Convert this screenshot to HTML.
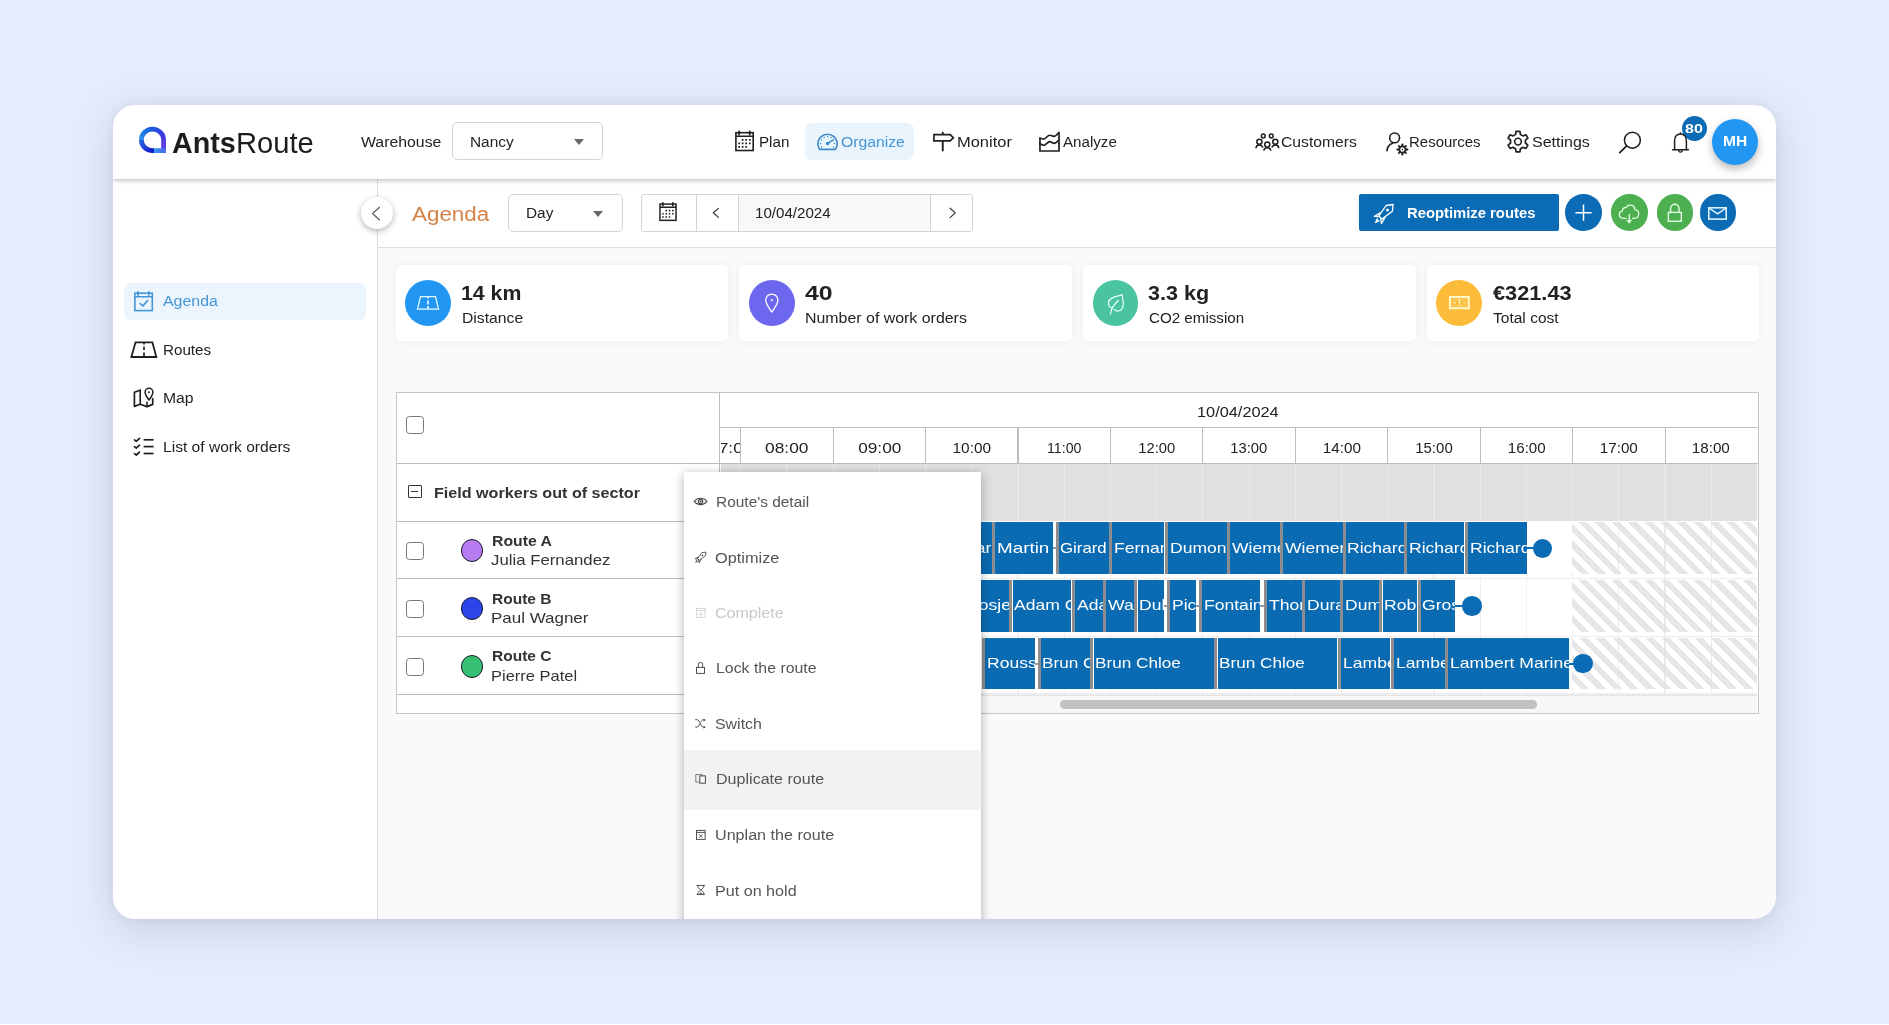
<!DOCTYPE html>
<html lang="en"><head><meta charset="utf-8"><title>AntsRoute - Agenda</title>
<style>
html,body{margin:0;padding:0}
body{width:1889px;height:1025px;overflow:hidden;position:relative;background:#e6ecfc;font-family:"Liberation Sans", sans-serif;}
div,span.t,svg{position:absolute;box-sizing:border-box}
span.t{white-space:pre;line-height:1;display:block}

.win{border-radius:22px;background:#fafafa;box-shadow:0 10px 40px rgba(85,90,120,.21),0 0 14px rgba(85,90,120,.07);overflow:hidden;will-change:transform}
.hdr{background:#fff;box-shadow:0 1px 5px rgba(0,0,0,.3)}
.side{background:#fff;border-right:1px solid #dcdcdc}
.card{background:#fff;border-radius:5px;box-shadow:0 0 10px rgba(20,20,60,.06)}
.circ{border-radius:50%}
.sel{background:#fff;border:1px solid #d4d4d4;border-radius:5px}
.cb{background:#fff;border:1.5px solid #777;border-radius:3.5px}
.bar{background:#0a6bb3;overflow:hidden}
.sep{background:#8d8d8d}
.menu{background:#fff;box-shadow:0 2px 10px rgba(0,0,0,.3)}

</style></head>
<body>
<div style="left:0px;top:1024px;width:1889px;height:1px;background:#fff"></div>
<div class="win" style="left:113px;top:105px;width:1663px;height:814px">
<div style="left:265px;top:74px;width:1398px;height:68.5px;background:#fff;border-bottom:1px solid #dedede"></div>
<div class="side" style="left:0px;top:74px;width:265px;height:740px;"></div>
<div style="left:11.4px;top:178px;width:241.2px;height:36.6px;background:#ecf5fe;border-radius:6px"></div>
<span class="t" style="left:49.95px;top:189.25px;font-size:14px;color:#4596d6;transform:scaleX(1.1365);transform-origin:0 50%;">Agenda</span>
<span class="t" style="left:50.49px;top:237.50px;font-size:14px;color:#222;transform:scaleX(1.0848);transform-origin:0 50%;">Routes</span>
<span class="t" style="left:50.46px;top:286.00px;font-size:14px;color:#222;transform:scaleX(1.1243);transform-origin:0 50%;">Map</span>
<span class="t" style="left:50.47px;top:334.75px;font-size:14px;color:#222;transform:scaleX(1.1136);transform-origin:0 50%;">List of work orders</span>
<span class="t" style="left:298.88px;top:99.10px;font-size:20px;color:#d58347;transform:scaleX(1.1193);transform-origin:0 50%;">Agenda</span>
<div class="sel" style="left:394.6px;top:88.7px;width:115px;height:38px;"></div>
<span class="t" style="left:412.73px;top:101.00px;font-size:14px;color:#222;transform:scaleX(1.0989);transform-origin:0 50%;">Day</span>
<div style="left:480px;top:105.5px;width:0px;height:0px;border-left:5.5px solid transparent;border-right:5.5px solid transparent;border-top:6px solid #666"></div>
<div style="left:527.5px;top:89px;width:332.5px;height:38px;background:#fff;border:1px solid #d4d4d4;border-radius:3px"></div>
<div style="left:582.5px;top:89px;width:1px;height:38px;background:#d4d4d4"></div>
<div style="left:625.25px;top:90px;width:192.5px;height:36px;background:#f8f8f8;border-left:1px solid #d4d4d4;border-right:1px solid #d4d4d4"></div>
<span class="t" style="left:642.49px;top:101.00px;font-size:14px;color:#222;transform:scaleX(1.0791);transform-origin:0 50%;">10/04/2024</span>
<div style="left:1246px;top:89.25px;width:200.25px;height:36.5px;background:#0b6cb5;border-radius:2px"></div>
<span class="t" style="left:1294.01px;top:100.50px;font-size:14px;font-weight:700;color:#fff;transform:scaleX(1.0578);transform-origin:0 50%;">Reoptimize routes</span>
<div class="circ" style="left:1452.2px;top:89.3px;width:36.6px;height:36.6px;background:#0b6cb5"></div>
<div class="circ" style="left:1498.1px;top:89.3px;width:36.6px;height:36.6px;background:#4caf50"></div>
<div class="circ" style="left:1543.5px;top:89.3px;width:36.6px;height:36.6px;background:#4caf50"></div>
<div class="circ" style="left:1586.6px;top:89.3px;width:36.6px;height:36.6px;background:#0b6cb5"></div>
<div class="circ" style="left:248px;top:92.2px;width:32px;height:32px;background:#fff;box-shadow:0 2px 6px rgba(0,0,0,.3)"></div>
<div class="card" style="left:282.5px;top:160px;width:332.5px;height:75.5px;"></div>
<div class="circ" style="left:292.1px;top:174.9px;width:45.8px;height:45.8px;background:#2196f3"></div>
<span class="t" style="left:347.69px;top:178.00px;font-size:20px;font-weight:700;color:#222;transform:scaleX(1.0640);transform-origin:0 50%;">14 km</span>
<span class="t" style="left:348.71px;top:206.25px;font-size:14px;color:#222;transform:scaleX(1.1221);transform-origin:0 50%;">Distance</span>
<div class="card" style="left:626.25px;top:160px;width:332.5px;height:75.5px;"></div>
<div class="circ" style="left:635.85px;top:174.9px;width:45.8px;height:45.8px;background:#6d66ee"></div>
<span class="t" style="left:691.51px;top:178.00px;font-size:20px;font-weight:700;color:#222;transform:scaleX(1.2404);transform-origin:0 50%;">40</span>
<span class="t" style="left:692.45px;top:206.25px;font-size:14px;color:#222;transform:scaleX(1.1368);transform-origin:0 50%;">Number of work orders</span>
<div class="card" style="left:970.0px;top:160px;width:332.5px;height:75.5px;"></div>
<div class="circ" style="left:979.6px;top:174.9px;width:45.8px;height:45.8px;background:#4ac3a0"></div>
<span class="t" style="left:1035.42px;top:178.00px;font-size:20px;font-weight:700;color:#222;transform:scaleX(1.0775);transform-origin:0 50%;">3.3 kg</span>
<span class="t" style="left:1035.74px;top:206.25px;font-size:14px;color:#222;transform:scaleX(1.0819);transform-origin:0 50%;">CO2 emission</span>
<div class="card" style="left:1313.75px;top:160px;width:332.5px;height:75.5px;"></div>
<div class="circ" style="left:1323.35px;top:174.9px;width:45.8px;height:45.8px;background:#fdbb3a"></div>
<span class="t" style="left:1379.66px;top:178.00px;font-size:20px;font-weight:700;color:#222;transform:scaleX(1.0872);transform-origin:0 50%;">€321.43</span>
<span class="t" style="left:1379.97px;top:206.25px;font-size:14px;color:#222;transform:scaleX(1.1096);transform-origin:0 50%;">Total cost</span>
<div class="hdr" style="left:0px;top:0px;width:1663px;height:74px;"></div>
<span class="t" style="left:59.06px;top:24.00px;font-size:29px;font-weight:700;color:#1d1d1b;transform:scaleX(0.9902);transform-origin:0 50%;">Ants</span>
<span class="t" style="left:123.04px;top:24.00px;font-size:29px;color:#1d1d1b;transform:scaleX(1.0055);transform-origin:0 50%;">Route</span>
<span class="t" style="left:248.21px;top:29.50px;font-size:14px;color:#222;transform:scaleX(1.1307);transform-origin:0 50%;">Warehouse</span>
<div class="sel" style="left:338.6px;top:17.4px;width:151.8px;height:38px;"></div>
<span class="t" style="left:356.73px;top:29.50px;font-size:14px;color:#222;transform:scaleX(1.0991);transform-origin:0 50%;">Nancy</span>
<div style="left:461px;top:34.2px;width:0px;height:0px;border-left:5.5px solid transparent;border-right:5.5px solid transparent;border-top:6px solid #666"></div>
<span class="t" style="left:645.74px;top:29.50px;font-size:14px;color:#222;transform:scaleX(1.0834);transform-origin:0 50%;">Plan</span>
<div style="left:692px;top:18.2px;width:109px;height:36.8px;background:#eaf4fd;border-radius:7px"></div>
<span class="t" style="left:727.96px;top:29.50px;font-size:14px;color:#4596d6;transform:scaleX(1.1242);transform-origin:0 50%;">Organize</span>
<span class="t" style="left:843.68px;top:29.50px;font-size:14px;color:#222;transform:scaleX(1.1753);transform-origin:0 50%;">Monitor</span>
<span class="t" style="left:950.49px;top:29.50px;font-size:14px;color:#222;transform:scaleX(1.0815);transform-origin:0 50%;">Analyze</span>
<span class="t" style="left:1167.72px;top:29.50px;font-size:14px;color:#222;transform:scaleX(1.1209);transform-origin:0 50%;">Customers</span>
<span class="t" style="left:1295.75px;top:29.50px;font-size:14px;color:#222;transform:scaleX(1.0702);transform-origin:0 50%;">Resources</span>
<span class="t" style="left:1418.95px;top:29.50px;font-size:14px;color:#222;transform:scaleX(1.1438);transform-origin:0 50%;">Settings</span>
<div class="circ" style="left:1599px;top:13.7px;width:46.2px;height:46.2px;background:#2196f3;box-shadow:0 4px 8px rgba(0,0,0,.28)"></div>
<span class="t" style="left:1609.92px;top:29.30px;font-size:14px;font-weight:700;color:#fff;transform:scaleX(1.1074);transform-origin:0 50%;">MH</span>
<div class="circ" style="left:1569px;top:11.2px;width:25px;height:25px;background:#0b6cb5"></div>
<span class="t" style="left:1572.00px;top:17.20px;font-size:13px;font-weight:700;color:#fff;transform:scaleX(1.2330);transform-origin:0 50%;">80</span>
<div style="left:283.0px;top:286.75px;width:1363.0px;height:322.0px;background:#fff;border:1.5px solid #c6c6c6"></div>
<div style="left:606.1px;top:287.5px;width:1.1px;height:71.0px;background:#bcbcbc"></div>
<div style="left:607.0px;top:322.0px;width:1038.25px;height:1.1px;background:#bcbcbc"></div>
<div style="left:283.75px;top:357.9px;width:1361.5px;height:1.1px;background:#bcbcbc"></div>
<span class="t" style="left:1084.43px;top:298.75px;font-size:15px;color:#222;transform:scaleX(1.0882);transform-origin:0 50%;">10/04/2024</span>
<div style="left:627.2px;top:323px;width:1.1px;height:35.5px;background:#bcbcbc"></div>
<span class="t" style="left:655.19px;top:334.50px;font-size:15px;color:#222;transform:scaleX(1.1559);transform-origin:50% 50%;">08:00</span>
<div style="left:719.63px;top:323px;width:1.1px;height:35.5px;background:#bcbcbc"></div>
<span class="t" style="left:747.62px;top:334.50px;font-size:15px;color:#222;transform:scaleX(1.1506);transform-origin:50% 50%;">09:00</span>
<div style="left:812.06px;top:323px;width:1.1px;height:35.5px;background:#bcbcbc"></div>
<span class="t" style="left:840.05px;top:334.50px;font-size:15px;color:#222;transform:scaleX(1.0254);transform-origin:50% 50%;">10:00</span>
<div style="left:904.49px;top:323px;width:1.1px;height:35.5px;background:#bcbcbc"></div>
<span class="t" style="left:933.04px;top:334.50px;font-size:15px;color:#222;transform:scaleX(0.9441);transform-origin:50% 50%;">11:00</span>
<div style="left:996.92px;top:323px;width:1.1px;height:35.5px;background:#bcbcbc"></div>
<span class="t" style="left:1024.91px;top:334.50px;font-size:15px;color:#222;transform:scaleX(0.9841);transform-origin:50% 50%;">12:00</span>
<div style="left:1089.35px;top:323px;width:1.1px;height:35.5px;background:#bcbcbc"></div>
<span class="t" style="left:1117.34px;top:334.50px;font-size:15px;color:#222;transform:scaleX(0.9841);transform-origin:50% 50%;">13:00</span>
<div style="left:1181.78px;top:323px;width:1.1px;height:35.5px;background:#bcbcbc"></div>
<span class="t" style="left:1209.77px;top:334.50px;font-size:15px;color:#222;transform:scaleX(1.0174);transform-origin:50% 50%;">14:00</span>
<div style="left:1274.21px;top:323px;width:1.1px;height:35.5px;background:#bcbcbc"></div>
<span class="t" style="left:1302.20px;top:334.50px;font-size:15px;color:#222;">15:00</span>
<div style="left:1366.64px;top:323px;width:1.1px;height:35.5px;background:#bcbcbc"></div>
<span class="t" style="left:1394.63px;top:334.50px;font-size:15px;color:#222;transform:scaleX(1.0067);transform-origin:50% 50%;">16:00</span>
<div style="left:1459.07px;top:323px;width:1.1px;height:35.5px;background:#bcbcbc"></div>
<span class="t" style="left:1487.06px;top:334.50px;font-size:15px;color:#222;transform:scaleX(1.0147);transform-origin:50% 50%;">17:00</span>
<div style="left:1551.5px;top:323px;width:1.1px;height:35.5px;background:#bcbcbc"></div>
<span class="t" style="left:1579.49px;top:334.50px;font-size:15px;color:#222;transform:scaleX(1.0147);transform-origin:50% 50%;">18:00</span>
<div style="left:607.60px;top:323.00px;width:19.55px;height:35px;overflow:hidden">
<span class="t" style="left:-9.10px;top:11.50px;font-size:15px;color:#222;transform:scaleX(1.1506);transform-origin:50% 50%;">07:00</span>
</div>
<div style="left:607.6px;top:359.0px;width:1036.2px;height:57.2px;background:#e0e0e0"></div>
<div style="left:627.15px;top:359.3px;width:1.2px;height:56.9px;background:#e9e9e9"></div>
<div style="left:673.37px;top:359.3px;width:1.2px;height:56.9px;background:#e9e9e9"></div>
<div style="left:719.58px;top:359.3px;width:1.2px;height:56.9px;background:#e9e9e9"></div>
<div style="left:765.8px;top:359.3px;width:1.2px;height:56.9px;background:#e9e9e9"></div>
<div style="left:812.01px;top:359.3px;width:1.2px;height:56.9px;background:#e9e9e9"></div>
<div style="left:858.23px;top:359.3px;width:1.2px;height:56.9px;background:#e9e9e9"></div>
<div style="left:904.44px;top:359.3px;width:1.2px;height:56.9px;background:#e9e9e9"></div>
<div style="left:950.66px;top:359.3px;width:1.2px;height:56.9px;background:#e9e9e9"></div>
<div style="left:996.87px;top:359.3px;width:1.2px;height:56.9px;background:#e9e9e9"></div>
<div style="left:1043.09px;top:359.3px;width:1.2px;height:56.9px;background:#e9e9e9"></div>
<div style="left:1089.3px;top:359.3px;width:1.2px;height:56.9px;background:#e9e9e9"></div>
<div style="left:1135.51px;top:359.3px;width:1.2px;height:56.9px;background:#e9e9e9"></div>
<div style="left:1181.73px;top:359.3px;width:1.2px;height:56.9px;background:#e9e9e9"></div>
<div style="left:1227.94px;top:359.3px;width:1.2px;height:56.9px;background:#e9e9e9"></div>
<div style="left:1274.16px;top:359.3px;width:1.2px;height:56.9px;background:#e9e9e9"></div>
<div style="left:1320.37px;top:359.3px;width:1.2px;height:56.9px;background:#e9e9e9"></div>
<div style="left:1366.59px;top:359.3px;width:1.2px;height:56.9px;background:#e9e9e9"></div>
<div style="left:1412.8px;top:359.3px;width:1.2px;height:56.9px;background:#e9e9e9"></div>
<div style="left:1459.02px;top:359.3px;width:1.2px;height:56.9px;background:#e9e9e9"></div>
<div style="left:1505.23px;top:359.3px;width:1.2px;height:56.9px;background:#e9e9e9"></div>
<div style="left:1551.45px;top:359.3px;width:1.2px;height:56.9px;background:#e9e9e9"></div>
<div style="left:1597.66px;top:359.3px;width:1.2px;height:56.9px;background:#e9e9e9"></div>
<div style="left:627.15px;top:416.2px;width:1.2px;height:57.8px;background:#f1f1f1"></div>
<div style="left:673.37px;top:416.2px;width:1.2px;height:57.8px;background:#f1f1f1"></div>
<div style="left:719.58px;top:416.2px;width:1.2px;height:57.8px;background:#f1f1f1"></div>
<div style="left:765.8px;top:416.2px;width:1.2px;height:57.8px;background:#f1f1f1"></div>
<div style="left:812.01px;top:416.2px;width:1.2px;height:57.8px;background:#f1f1f1"></div>
<div style="left:858.23px;top:416.2px;width:1.2px;height:57.8px;background:#f1f1f1"></div>
<div style="left:904.44px;top:416.2px;width:1.2px;height:57.8px;background:#f1f1f1"></div>
<div style="left:950.66px;top:416.2px;width:1.2px;height:57.8px;background:#f1f1f1"></div>
<div style="left:996.87px;top:416.2px;width:1.2px;height:57.8px;background:#f1f1f1"></div>
<div style="left:1043.09px;top:416.2px;width:1.2px;height:57.8px;background:#f1f1f1"></div>
<div style="left:1089.3px;top:416.2px;width:1.2px;height:57.8px;background:#f1f1f1"></div>
<div style="left:1135.51px;top:416.2px;width:1.2px;height:57.8px;background:#f1f1f1"></div>
<div style="left:1181.73px;top:416.2px;width:1.2px;height:57.8px;background:#f1f1f1"></div>
<div style="left:1227.94px;top:416.2px;width:1.2px;height:57.8px;background:#f1f1f1"></div>
<div style="left:1274.16px;top:416.2px;width:1.2px;height:57.8px;background:#f1f1f1"></div>
<div style="left:1320.37px;top:416.2px;width:1.2px;height:57.8px;background:#f1f1f1"></div>
<div style="left:1366.59px;top:416.2px;width:1.2px;height:57.8px;background:#f1f1f1"></div>
<div style="left:1412.8px;top:416.2px;width:1.2px;height:57.8px;background:#f1f1f1"></div>
<div style="left:1459.02px;top:416.2px;width:1.2px;height:57.8px;background:#f1f1f1"></div>
<div style="left:1505.23px;top:416.2px;width:1.2px;height:57.8px;background:#f1f1f1"></div>
<div style="left:1551.45px;top:416.2px;width:1.2px;height:57.8px;background:#f1f1f1"></div>
<div style="left:1597.66px;top:416.2px;width:1.2px;height:57.8px;background:#f1f1f1"></div>
<div style="left:608.2px;top:472.8px;width:1035.6px;height:1.2px;background:#ededed"></div>
<div style="left:1459.12px;top:417.0px;width:184.68px;height:51.8px;background:repeating-linear-gradient(45deg,#e6e6e6 0,#e6e6e6 .85px,#fff .85px,#fff 6.55px,#e6e6e6 6.55px,#e6e6e6 11.6px)"></div>
<div style="left:1505.24px;top:417.0px;width:1.2px;height:51.8px;background:rgba(225,225,225,.7)"></div>
<div style="left:1551.45px;top:417.0px;width:1.2px;height:51.8px;background:rgba(225,225,225,.7)"></div>
<div style="left:1597.67px;top:417.0px;width:1.2px;height:51.8px;background:rgba(225,225,225,.7)"></div>
<div style="left:627.15px;top:474.0px;width:1.2px;height:57.8px;background:#f1f1f1"></div>
<div style="left:673.37px;top:474.0px;width:1.2px;height:57.8px;background:#f1f1f1"></div>
<div style="left:719.58px;top:474.0px;width:1.2px;height:57.8px;background:#f1f1f1"></div>
<div style="left:765.8px;top:474.0px;width:1.2px;height:57.8px;background:#f1f1f1"></div>
<div style="left:812.01px;top:474.0px;width:1.2px;height:57.8px;background:#f1f1f1"></div>
<div style="left:858.23px;top:474.0px;width:1.2px;height:57.8px;background:#f1f1f1"></div>
<div style="left:904.44px;top:474.0px;width:1.2px;height:57.8px;background:#f1f1f1"></div>
<div style="left:950.66px;top:474.0px;width:1.2px;height:57.8px;background:#f1f1f1"></div>
<div style="left:996.87px;top:474.0px;width:1.2px;height:57.8px;background:#f1f1f1"></div>
<div style="left:1043.09px;top:474.0px;width:1.2px;height:57.8px;background:#f1f1f1"></div>
<div style="left:1089.3px;top:474.0px;width:1.2px;height:57.8px;background:#f1f1f1"></div>
<div style="left:1135.51px;top:474.0px;width:1.2px;height:57.8px;background:#f1f1f1"></div>
<div style="left:1181.73px;top:474.0px;width:1.2px;height:57.8px;background:#f1f1f1"></div>
<div style="left:1227.94px;top:474.0px;width:1.2px;height:57.8px;background:#f1f1f1"></div>
<div style="left:1274.16px;top:474.0px;width:1.2px;height:57.8px;background:#f1f1f1"></div>
<div style="left:1320.37px;top:474.0px;width:1.2px;height:57.8px;background:#f1f1f1"></div>
<div style="left:1366.59px;top:474.0px;width:1.2px;height:57.8px;background:#f1f1f1"></div>
<div style="left:1412.8px;top:474.0px;width:1.2px;height:57.8px;background:#f1f1f1"></div>
<div style="left:1459.02px;top:474.0px;width:1.2px;height:57.8px;background:#f1f1f1"></div>
<div style="left:1505.23px;top:474.0px;width:1.2px;height:57.8px;background:#f1f1f1"></div>
<div style="left:1551.45px;top:474.0px;width:1.2px;height:57.8px;background:#f1f1f1"></div>
<div style="left:1597.66px;top:474.0px;width:1.2px;height:57.8px;background:#f1f1f1"></div>
<div style="left:608.2px;top:530.6px;width:1035.6px;height:1.2px;background:#ededed"></div>
<div style="left:1459.12px;top:474.8px;width:184.68px;height:51.8px;background:repeating-linear-gradient(45deg,#e6e6e6 0,#e6e6e6 .85px,#fff .85px,#fff 6.55px,#e6e6e6 6.55px,#e6e6e6 11.6px)"></div>
<div style="left:1505.24px;top:474.8px;width:1.2px;height:51.8px;background:rgba(225,225,225,.7)"></div>
<div style="left:1551.45px;top:474.8px;width:1.2px;height:51.8px;background:rgba(225,225,225,.7)"></div>
<div style="left:1597.67px;top:474.8px;width:1.2px;height:51.8px;background:rgba(225,225,225,.7)"></div>
<div style="left:627.15px;top:531.8px;width:1.2px;height:57.8px;background:#f1f1f1"></div>
<div style="left:673.37px;top:531.8px;width:1.2px;height:57.8px;background:#f1f1f1"></div>
<div style="left:719.58px;top:531.8px;width:1.2px;height:57.8px;background:#f1f1f1"></div>
<div style="left:765.8px;top:531.8px;width:1.2px;height:57.8px;background:#f1f1f1"></div>
<div style="left:812.01px;top:531.8px;width:1.2px;height:57.8px;background:#f1f1f1"></div>
<div style="left:858.23px;top:531.8px;width:1.2px;height:57.8px;background:#f1f1f1"></div>
<div style="left:904.44px;top:531.8px;width:1.2px;height:57.8px;background:#f1f1f1"></div>
<div style="left:950.66px;top:531.8px;width:1.2px;height:57.8px;background:#f1f1f1"></div>
<div style="left:996.87px;top:531.8px;width:1.2px;height:57.8px;background:#f1f1f1"></div>
<div style="left:1043.09px;top:531.8px;width:1.2px;height:57.8px;background:#f1f1f1"></div>
<div style="left:1089.3px;top:531.8px;width:1.2px;height:57.8px;background:#f1f1f1"></div>
<div style="left:1135.51px;top:531.8px;width:1.2px;height:57.8px;background:#f1f1f1"></div>
<div style="left:1181.73px;top:531.8px;width:1.2px;height:57.8px;background:#f1f1f1"></div>
<div style="left:1227.94px;top:531.8px;width:1.2px;height:57.8px;background:#f1f1f1"></div>
<div style="left:1274.16px;top:531.8px;width:1.2px;height:57.8px;background:#f1f1f1"></div>
<div style="left:1320.37px;top:531.8px;width:1.2px;height:57.8px;background:#f1f1f1"></div>
<div style="left:1366.59px;top:531.8px;width:1.2px;height:57.8px;background:#f1f1f1"></div>
<div style="left:1412.8px;top:531.8px;width:1.2px;height:57.8px;background:#f1f1f1"></div>
<div style="left:1459.02px;top:531.8px;width:1.2px;height:57.8px;background:#f1f1f1"></div>
<div style="left:1505.23px;top:531.8px;width:1.2px;height:57.8px;background:#f1f1f1"></div>
<div style="left:1551.45px;top:531.8px;width:1.2px;height:57.8px;background:#f1f1f1"></div>
<div style="left:1597.66px;top:531.8px;width:1.2px;height:57.8px;background:#f1f1f1"></div>
<div style="left:608.2px;top:588.4px;width:1035.6px;height:1.2px;background:#ededed"></div>
<div style="left:1459.12px;top:532.6px;width:184.68px;height:51.8px;background:repeating-linear-gradient(45deg,#e6e6e6 0,#e6e6e6 .85px,#fff .85px,#fff 6.55px,#e6e6e6 6.55px,#e6e6e6 11.6px)"></div>
<div style="left:1505.24px;top:532.6px;width:1.2px;height:51.8px;background:rgba(225,225,225,.7)"></div>
<div style="left:1551.45px;top:532.6px;width:1.2px;height:51.8px;background:rgba(225,225,225,.7)"></div>
<div style="left:1597.67px;top:532.6px;width:1.2px;height:51.8px;background:rgba(225,225,225,.7)"></div>
<div class="sep" style="left:844.6px;top:417.0px;width:3.1px;height:51.8px;"></div>
<div class="bar" style="left:847.70px;top:417.00px;width:31.30px;height:51.8px">
<span class="t" style="left:1.70px;top:17.50px;font-size:15px;color:#fff;transform:scaleX(1.1700);transform-origin:0 50%;">Garcia</span>
</div>
<div class="sep" style="left:878.9px;top:417.0px;width:3.1px;height:51.8px;"></div>
<div class="bar" style="left:882.00px;top:417.00px;width:58.00px;height:51.8px">
<span class="t" style="left:1.70px;top:17.50px;font-size:15px;color:#fff;transform:scaleX(1.2550);transform-origin:0 50%;">Martin</span>
</div>
<div style="left:940px;top:442.2px;width:2.65px;height:1.8px;background:#9a9a9a"></div>
<div class="sep" style="left:942.65px;top:417.0px;width:3.1px;height:51.8px;"></div>
<div class="bar" style="left:945.75px;top:417.00px;width:50.00px;height:51.8px">
<span class="t" style="left:1.70px;top:17.50px;font-size:15px;color:#fff;transform:scaleX(1.1200);transform-origin:0 50%;">Girard</span>
</div>
<div class="sep" style="left:995.9px;top:417.0px;width:3.1px;height:51.8px;"></div>
<div class="bar" style="left:999.00px;top:417.00px;width:51.75px;height:51.8px">
<span class="t" style="left:1.70px;top:17.50px;font-size:15px;color:#fff;transform:scaleX(1.1700);transform-origin:0 50%;">Fernandez</span>
</div>
<div class="sep" style="left:1051.9px;top:417.0px;width:3.1px;height:51.8px;"></div>
<div class="bar" style="left:1055.00px;top:417.00px;width:58.75px;height:51.8px">
<span class="t" style="left:1.70px;top:17.50px;font-size:15px;color:#fff;transform:scaleX(1.1700);transform-origin:0 50%;">Dumont</span>
</div>
<div class="sep" style="left:1113.9px;top:417.0px;width:3.1px;height:51.8px;"></div>
<div class="bar" style="left:1117.00px;top:417.00px;width:50.00px;height:51.8px">
<span class="t" style="left:1.70px;top:17.50px;font-size:15px;color:#fff;transform:scaleX(1.1700);transform-origin:0 50%;">Wiemer</span>
</div>
<div class="sep" style="left:1166.9px;top:417.0px;width:3.1px;height:51.8px;"></div>
<div class="bar" style="left:1170.00px;top:417.00px;width:59.50px;height:51.8px">
<span class="t" style="left:1.70px;top:17.50px;font-size:15px;color:#fff;transform:scaleX(1.1700);transform-origin:0 50%;">Wiemer</span>
</div>
<div class="sep" style="left:1229.65px;top:417.0px;width:3.1px;height:51.8px;"></div>
<div class="bar" style="left:1232.75px;top:417.00px;width:57.75px;height:51.8px">
<span class="t" style="left:1.70px;top:17.50px;font-size:15px;color:#fff;transform:scaleX(1.1700);transform-origin:0 50%;">Richard</span>
</div>
<div class="sep" style="left:1290.9px;top:417.0px;width:3.1px;height:51.8px;"></div>
<div class="bar" style="left:1294.00px;top:417.00px;width:57.40px;height:51.8px">
<span class="t" style="left:1.70px;top:17.50px;font-size:15px;color:#fff;transform:scaleX(1.1700);transform-origin:0 50%;">Richard</span>
</div>
<div class="sep" style="left:1351.9px;top:417.0px;width:3.1px;height:51.8px;"></div>
<div class="bar" style="left:1355.00px;top:417.00px;width:58.80px;height:51.8px">
<span class="t" style="left:1.70px;top:17.50px;font-size:15px;color:#fff;transform:scaleX(1.1700);transform-origin:0 50%;">Richard</span>
</div>
<div style="left:1413.8px;top:442.2px;width:10.700000000000045px;height:2px;background:#0b6cb5"></div>
<div class="circ" style="left:1419.8px;top:433.5px;width:19.4px;height:19.4px;background:#0b6cb5"></div>
<div class="sep" style="left:849.4px;top:474.8px;width:3.1px;height:51.8px;"></div>
<div class="bar" style="left:852.50px;top:474.80px;width:43.75px;height:51.8px">
<span class="t" style="left:1.70px;top:17.50px;font-size:15px;color:#fff;transform:scaleX(1.1700);transform-origin:0 50%;">Bosjean</span>
</div>
<div class="sep" style="left:896.4px;top:474.8px;width:3.1px;height:51.8px;"></div>
<div class="bar" style="left:899.50px;top:474.80px;width:58.00px;height:51.8px">
<span class="t" style="left:1.70px;top:17.50px;font-size:15px;color:#fff;transform:scaleX(1.1700);transform-origin:0 50%;">Adam Chloe</span>
</div>
<div class="sep" style="left:958.9px;top:474.8px;width:3.1px;height:51.8px;"></div>
<div class="bar" style="left:962.00px;top:474.80px;width:28.25px;height:51.8px">
<span class="t" style="left:1.70px;top:17.50px;font-size:15px;color:#fff;transform:scaleX(1.1700);transform-origin:0 50%;">Adam</span>
</div>
<div class="sep" style="left:990.15px;top:474.8px;width:3.1px;height:51.8px;"></div>
<div class="bar" style="left:993.25px;top:474.80px;width:28.00px;height:51.8px">
<span class="t" style="left:1.70px;top:17.50px;font-size:15px;color:#fff;transform:scaleX(1.1700);transform-origin:0 50%;">Wagner</span>
</div>
<div class="sep" style="left:1021.4px;top:474.8px;width:3.1px;height:51.8px;"></div>
<div class="bar" style="left:1024.50px;top:474.80px;width:26.75px;height:51.8px">
<span class="t" style="left:1.70px;top:17.50px;font-size:15px;color:#fff;transform:scaleX(1.1700);transform-origin:0 50%;">Dubois</span>
</div>
<div style="left:1051.25px;top:500.0px;width:2.65px;height:1.8px;background:#9a9a9a"></div>
<div class="sep" style="left:1053.9px;top:474.8px;width:3.1px;height:51.8px;"></div>
<div class="bar" style="left:1057.00px;top:474.80px;width:26.25px;height:51.8px">
<span class="t" style="left:1.70px;top:17.50px;font-size:15px;color:#fff;transform:scaleX(1.1700);transform-origin:0 50%;">Picard</span>
</div>
<div style="left:1083.25px;top:500.0px;width:2.65px;height:1.8px;background:#9a9a9a"></div>
<div class="sep" style="left:1085.9px;top:474.8px;width:3.1px;height:51.8px;"></div>
<div class="bar" style="left:1089.00px;top:474.80px;width:58.00px;height:51.8px">
<span class="t" style="left:1.70px;top:17.50px;font-size:15px;color:#fff;transform:scaleX(1.1700);transform-origin:0 50%;">Fontaine</span>
</div>
<div style="left:1147px;top:500.0px;width:3.9px;height:1.8px;background:#9a9a9a"></div>
<div class="sep" style="left:1150.9px;top:474.8px;width:3.1px;height:51.8px;"></div>
<div class="bar" style="left:1154.00px;top:474.80px;width:35.00px;height:51.8px">
<span class="t" style="left:1.70px;top:17.50px;font-size:15px;color:#fff;transform:scaleX(1.1700);transform-origin:0 50%;">Thomas</span>
</div>
<div class="sep" style="left:1188.9px;top:474.8px;width:3.1px;height:51.8px;"></div>
<div class="bar" style="left:1192.00px;top:474.80px;width:35.00px;height:51.8px">
<span class="t" style="left:1.70px;top:17.50px;font-size:15px;color:#fff;transform:scaleX(1.1700);transform-origin:0 50%;">Durand</span>
</div>
<div class="sep" style="left:1226.9px;top:474.8px;width:3.1px;height:51.8px;"></div>
<div class="bar" style="left:1230.00px;top:474.80px;width:36.30px;height:51.8px">
<span class="t" style="left:1.70px;top:17.50px;font-size:15px;color:#fff;transform:scaleX(1.1700);transform-origin:0 50%;">Dumas</span>
</div>
<div class="sep" style="left:1266.4px;top:474.8px;width:3.1px;height:51.8px;"></div>
<div class="bar" style="left:1269.50px;top:474.80px;width:34.80px;height:51.8px">
<span class="t" style="left:1.70px;top:17.50px;font-size:15px;color:#fff;transform:scaleX(1.1700);transform-origin:0 50%;">Robert</span>
</div>
<div class="sep" style="left:1304.6px;top:474.8px;width:3.1px;height:51.8px;"></div>
<div class="bar" style="left:1307.70px;top:474.80px;width:34.05px;height:51.8px">
<span class="t" style="left:1.70px;top:17.50px;font-size:15px;color:#fff;transform:scaleX(1.1700);transform-origin:0 50%;">Gros</span>
</div>
<div style="left:1341.75px;top:500.0px;width:12.25px;height:2px;background:#0b6cb5"></div>
<div class="circ" style="left:1349.3px;top:491.3px;width:19.4px;height:19.4px;background:#0b6cb5"></div>
<div class="sep" style="left:868.9px;top:532.6px;width:3.1px;height:51.8px;"></div>
<div class="bar" style="left:872.00px;top:532.60px;width:50.00px;height:51.8px">
<span class="t" style="left:1.70px;top:17.60px;font-size:15px;color:#fff;transform:scaleX(1.1700);transform-origin:0 50%;">Roussel</span>
</div>
<div style="left:922px;top:557.8px;width:2.5px;height:1.8px;background:#9a9a9a"></div>
<div class="sep" style="left:924.5px;top:532.6px;width:3.1px;height:51.8px;"></div>
<div class="bar" style="left:927.60px;top:532.60px;width:49.40px;height:51.8px">
<span class="t" style="left:1.70px;top:17.60px;font-size:15px;color:#fff;transform:scaleX(1.1450);transform-origin:0 50%;">Brun Chloe</span>
</div>
<div class="sep" style="left:977.4px;top:532.6px;width:3.1px;height:51.8px;"></div>
<div class="bar" style="left:980.50px;top:532.60px;width:120.30px;height:51.8px">
<span class="t" style="left:1.70px;top:17.60px;font-size:15px;color:#fff;transform:scaleX(1.1450);transform-origin:0 50%;">Brun Chloe</span>
</div>
<div class="sep" style="left:1101.4px;top:532.6px;width:3.1px;height:51.8px;"></div>
<div class="bar" style="left:1104.50px;top:532.60px;width:119.70px;height:51.8px">
<span class="t" style="left:1.70px;top:17.60px;font-size:15px;color:#fff;transform:scaleX(1.1450);transform-origin:0 50%;">Brun Chloe</span>
</div>
<div class="sep" style="left:1225.1px;top:532.6px;width:3.1px;height:51.8px;"></div>
<div class="bar" style="left:1228.20px;top:532.60px;width:48.80px;height:51.8px">
<span class="t" style="left:1.70px;top:17.60px;font-size:15px;color:#fff;transform:scaleX(1.1700);transform-origin:0 50%;">Lambert</span>
</div>
<div class="sep" style="left:1277.9px;top:532.6px;width:3.1px;height:51.8px;"></div>
<div class="bar" style="left:1281.00px;top:532.60px;width:51.30px;height:51.8px">
<span class="t" style="left:1.70px;top:17.60px;font-size:15px;color:#fff;transform:scaleX(1.1700);transform-origin:0 50%;">Lambert</span>
</div>
<div class="sep" style="left:1331.9px;top:532.6px;width:3.1px;height:51.8px;"></div>
<div class="bar" style="left:1335.00px;top:532.60px;width:120.50px;height:51.8px">
<span class="t" style="left:1.70px;top:17.60px;font-size:15px;color:#fff;transform:scaleX(1.1700);transform-origin:0 50%;">Lambert Marine</span>
</div>
<div style="left:1455.5px;top:557.8px;width:9.5px;height:2px;background:#0b6cb5"></div>
<div class="circ" style="left:1460.3px;top:549.1px;width:19.4px;height:19.4px;background:#0b6cb5"></div>
<div style="left:608.2px;top:589.6px;width:1035.6px;height:18px;background:#f7f7f7;border-top:1px solid #e6e6e6"></div>
<div style="left:946.8px;top:595.2px;width:476.8px;height:8.6px;background:#c1c1c1;border-radius:4.3px"></div>
<div style="left:284.5px;top:359.4px;width:322.5px;height:248px;background:#fff"></div>
<div style="left:606.1px;top:359px;width:1.1px;height:248.5px;background:#bcbcbc"></div>
<div style="left:283.75px;top:415.7px;width:323.75px;height:1.1px;background:#bcbcbc"></div>
<div style="left:283.75px;top:473.25px;width:323.75px;height:1.1px;background:#bcbcbc"></div>
<div style="left:283.75px;top:530.75px;width:323.75px;height:1.1px;background:#bcbcbc"></div>
<div style="left:283.75px;top:588.95px;width:323.75px;height:1.1px;background:#bcbcbc"></div>
<div class="cb" style="left:293.2px;top:311.2px;width:18.3px;height:18.3px;"></div>
<div class="cb" style="left:293.2px;top:436.9px;width:18.3px;height:18.3px;"></div>
<div class="cb" style="left:293.2px;top:494.7px;width:18.3px;height:18.3px;"></div>
<div class="cb" style="left:293.2px;top:552.5px;width:18.3px;height:18.3px;"></div>
<div style="left:295px;top:380px;width:13.8px;height:13.4px;border:1.6px solid #333;border-radius:1px"></div>
<div style="left:298.3px;top:385.9px;width:7.2px;height:1.6px;background:#333"></div>
<span class="t" style="left:320.69px;top:379.50px;font-size:15px;font-weight:700;color:#333;transform:scaleX(1.0742);transform-origin:0 50%;">Field workers out of sector</span>
<div class="circ" style="left:347.6px;top:434.4px;width:22.8px;height:22.8px;background:#b57bf0;border:1.3px solid #1a1a2a"></div>
<span class="t" style="left:378.71px;top:427.75px;font-size:15px;font-weight:700;color:#333;transform:scaleX(1.0526);transform-origin:0 50%;">Route A</span>
<span class="t" style="left:378.36px;top:447.00px;font-size:15px;color:#333;transform:scaleX(1.1191);transform-origin:0 50%;">Julia Fernandez</span>
<div class="circ" style="left:347.6px;top:492.2px;width:22.8px;height:22.8px;background:#2b45e8;border:1.3px solid #1a1a2a"></div>
<span class="t" style="left:378.72px;top:485.55px;font-size:15px;font-weight:700;color:#333;transform:scaleX(1.0339);transform-origin:0 50%;">Route B</span>
<span class="t" style="left:378.35px;top:504.80px;font-size:15px;color:#333;transform:scaleX(1.1311);transform-origin:0 50%;">Paul Wagner</span>
<div class="circ" style="left:347.6px;top:550.0px;width:22.8px;height:22.8px;background:#35c073;border:1.3px solid #1a1a2a"></div>
<span class="t" style="left:378.72px;top:543.35px;font-size:15px;font-weight:700;color:#333;transform:scaleX(1.0339);transform-origin:0 50%;">Route C</span>
<span class="t" style="left:378.38px;top:562.60px;font-size:15px;color:#333;transform:scaleX(1.0998);transform-origin:0 50%;">Pierre Patel</span>
<div class="menu" style="left:571.4px;top:367.0px;width:296.20000000000005px;height:457.0px;"></div>
<div style="left:571.4px;top:644.6px;width:296.20000000000005px;height:60px;background:#f2f2f2"></div>
<span class="t" style="left:602.98px;top:390.00px;font-size:14px;color:#555;transform:scaleX(1.1034);transform-origin:0 50%;">Route's detail</span>
<span class="t" style="left:602.43px;top:445.50px;font-size:14px;color:#555;transform:scaleX(1.1654);transform-origin:0 50%;">Optimize</span>
<span class="t" style="left:602.45px;top:501.25px;font-size:14px;color:#c9c9c9;transform:scaleX(1.1452);transform-origin:0 50%;">Complete</span>
<span class="t" style="left:602.96px;top:556.25px;font-size:14px;color:#555;transform:scaleX(1.1339);transform-origin:0 50%;">Lock the route</span>
<span class="t" style="left:602.45px;top:612.00px;font-size:14px;color:#555;transform:scaleX(1.1367);transform-origin:0 50%;">Switch</span>
<span class="t" style="left:602.95px;top:667.25px;font-size:14px;color:#555;transform:scaleX(1.1481);transform-origin:0 50%;">Duplicate route</span>
<span class="t" style="left:602.44px;top:723.00px;font-size:14px;color:#555;transform:scaleX(1.1506);transform-origin:0 50%;">Unplan the route</span>
<span class="t" style="left:602.44px;top:778.50px;font-size:14px;color:#555;transform:scaleX(1.1521);transform-origin:0 50%;">Put on hold</span>
<svg style="left:23.00px;top:19.00px;width:33px;height:32px" viewBox="136 124 33 32" fill="none" stroke-linecap="round" stroke-linejoin="round" ><defs><linearGradient id="lgA" x1="141" y1="140" x2="152.5" y2="129" gradientUnits="userSpaceOnUse"><stop offset="0" stop-color="#2b95ec"/><stop offset="1" stop-color="#1a55e0"/></linearGradient><linearGradient id="lgB" x1="152.5" y1="129" x2="164" y2="140" gradientUnits="userSpaceOnUse"><stop offset="0" stop-color="#1a55e0"/><stop offset="1" stop-color="#4b35dc"/></linearGradient><linearGradient id="lgC" x1="164" y1="151" x2="153" y2="151" gradientUnits="userSpaceOnUse"><stop offset="0" stop-color="#4a6cf0"/><stop offset="1" stop-color="#2f9af2"/></linearGradient><linearGradient id="lgD" x1="153" y1="151" x2="141" y2="140" gradientUnits="userSpaceOnUse"><stop offset="0" stop-color="#1216c4"/><stop offset="1" stop-color="#2a66e2"/></linearGradient></defs><path d="M141.4,140.4V139.9A11.1,10.7 0 0 1 152.5,129.2H153.1" stroke="url(#lgA)" stroke-width="4.8" stroke-linecap="butt"/><path d="M152.5,129.2A11.1,10.7 0 0 1 163.6,139.9" stroke="url(#lgB)" stroke-width="4.8" stroke-linecap="butt"/><path d="M163.6,139.5V153" stroke="#5a3fe2" stroke-width="4.8" stroke-linecap="butt"/><path d="M166,150.6H153.5" stroke="url(#lgC)" stroke-width="4.8" stroke-linecap="butt"/><path d="M154,150.6 H152.5 A11.1,10.7 0 0 1 141.4,139.9" stroke="url(#lgD)" stroke-width="4.8" stroke-linecap="butt"/></svg>
<svg style="left:620.00px;top:24.00px;width:24px;height:25px" viewBox="733 129 24 25" fill="none" stroke-linecap="round" stroke-linejoin="round" ><rect x="735.90" y="132.70" width="17.30" height="17.80" stroke="#1f1f1f" stroke-width="1.6" stroke-linejoin="miter"/><path d="M735.90,136.31H753.20" stroke="#1f1f1f" stroke-width="1.6" stroke-linecap="butt"/><path d="M739.07,131.50V134.57" stroke="#1f1f1f" stroke-width="1.76"/><path d="M749.75,131.50V134.57" stroke="#1f1f1f" stroke-width="1.76"/><rect x="741.79" y="139.01" width="1.74" height="1.74" fill="#1f1f1f" rx=".3"/><rect x="745.29" y="139.01" width="1.74" height="1.74" fill="#1f1f1f" rx=".3"/><rect x="748.88" y="139.01" width="1.74" height="1.74" fill="#1f1f1f" rx=".3"/><rect x="738.29" y="142.47" width="1.74" height="1.74" fill="#1f1f1f" rx=".3"/><rect x="741.79" y="142.47" width="1.74" height="1.74" fill="#1f1f1f" rx=".3"/><rect x="745.29" y="142.47" width="1.74" height="1.74" fill="#1f1f1f" rx=".3"/><rect x="748.88" y="142.47" width="1.74" height="1.74" fill="#1f1f1f" rx=".3"/><rect x="738.29" y="145.94" width="1.74" height="1.74" fill="#1f1f1f" rx=".3"/><rect x="741.79" y="145.94" width="1.74" height="1.74" fill="#1f1f1f" rx=".3"/><rect x="745.29" y="145.94" width="1.74" height="1.74" fill="#1f1f1f" rx=".3"/></svg>
<svg style="left:702.00px;top:26.00px;width:26px;height:22px" viewBox="815 131 26 22" fill="none" stroke-linecap="round" stroke-linejoin="round" ><path d="M819.6,149.35A9.65,9.65 0 1 1 835.5,149.35Z" stroke="#3b86c6" stroke-width="1.6" fill="#eaf8ff"/><circle cx="827.6" cy="143.4" r="1.75" fill="#3b86c6"/><path d="M827.6,143.4L833.5,139.9" stroke="#3b86c6" stroke-width="1.5"/><circle cx="820.65" cy="143.50" r=".75" fill="#3b86c6"/><circle cx="821.57" cy="140.05" r=".75" fill="#3b86c6"/><circle cx="824.10" cy="137.52" r=".75" fill="#3b86c6"/><circle cx="827.55" cy="136.60" r=".75" fill="#3b86c6"/><circle cx="831.00" cy="137.52" r=".75" fill="#3b86c6"/><circle cx="834.45" cy="143.50" r=".75" fill="#3b86c6"/><circle cx="833.53" cy="146.95" r=".75" fill="#3b86c6"/><circle cx="821.57" cy="146.95" r=".75" fill="#3b86c6"/></svg>
<svg style="left:818.00px;top:25.00px;width:26px;height:24px" viewBox="931 130 26 24" fill="none" stroke-linecap="round" stroke-linejoin="round" ><path d="M933.95,134.65H950.2L953.3,137.75L950.2,140.85H933.95Z" stroke="#1f1f1f" stroke-width="1.7" fill="none" stroke-linejoin="miter"/><path d="M942.75,132.6V134M942.75,141.6V150.6" stroke="#1f1f1f" stroke-width="1.9" fill="none" /></svg>
<svg style="left:924.00px;top:24.00px;width:26px;height:25px" viewBox="1037 129 26 25" fill="none" stroke-linecap="round" stroke-linejoin="round" ><path d="M1039.95,137.9V151H1059.0V132.4" stroke="#1f1f1f" stroke-width="1.7" fill="none" stroke-linejoin="miter" stroke-linecap="butt"/><path d="M1039.95,137.9C1041.5,138.3 1043,139.3 1044.4,138.9C1046.3,138.3 1047.6,135.4 1049.4,135.3C1051.2,135.2 1053,136.8 1054.7,136.3C1056.4,135.6 1057.8,133.4 1059.0,132.2" stroke="#1f1f1f" stroke-width="1.6" fill="none" /><path d="M1039.95,143.8C1041.5,144.3 1043,145.6 1044.4,145.2C1046.3,144.5 1047.8,141.7 1049.6,141.6C1051.4,141.5 1053,143.8 1054.7,143.3C1056.4,142.6 1057.8,141.0 1059.0,140" stroke="#1f1f1f" stroke-width="1.6" fill="none" /></svg>
<svg style="left:1140.00px;top:26.00px;width:29px;height:22px" viewBox="1253 131 29 22" fill="none" stroke-linecap="round" stroke-linejoin="round" ><circle cx="1263.3" cy="136.0" r="1.9" stroke="#1f1f1f" stroke-width="1.5"/><circle cx="1271.3" cy="136.0" r="1.9" stroke="#1f1f1f" stroke-width="1.5"/><circle cx="1259.4" cy="141.7" r="2.55" stroke="#1f1f1f" stroke-width="1.5"/><circle cx="1275.3" cy="141.7" r="2.55" stroke="#1f1f1f" stroke-width="1.5"/><circle cx="1267.3" cy="144.6" r="2.55" stroke="#1f1f1f" stroke-width="1.5"/><path d="M1256.0,147.6C1256.6,145.9 1257.8,144.9 1259.4,144.9C1261.0,144.9 1262.0,145.8 1262.6,147.0" stroke="#1f1f1f" stroke-width="1.6" fill="none" /><path d="M1272.1,147.0C1272.7,145.8 1273.7,144.9 1275.3,144.9C1276.9,144.9 1278.1,145.9 1278.7,147.6" stroke="#1f1f1f" stroke-width="1.6" fill="none" /><path d="M1263.9,150.0C1264.5,148.5 1265.6,147.7 1267.3,147.7C1269.0,147.7 1270.1,148.5 1270.7,150.0" stroke="#1f1f1f" stroke-width="1.6" fill="none" /></svg>
<svg style="left:1271.00px;top:25.00px;width:27px;height:28px" viewBox="1384 130 27 28" fill="none" stroke-linecap="round" stroke-linejoin="round" ><circle cx="1394.6" cy="137.9" r="4.9" stroke="#1f1f1f" stroke-width="1.6"/><path d="M1387.0,150.6C1387.3,147.2 1389.3,144.4 1392.6,143.3" stroke="#1f1f1f" stroke-width="1.7" fill="none" /><path d="M1401.14,146.67L1401.90,143.82L1402.90,143.82L1403.66,146.67A3.10,3.10 0 0 1 1403.51,146.61L1406.06,145.13L1406.77,145.84L1405.29,148.39A3.10,3.10 0 0 1 1405.23,148.24L1408.08,149.00L1408.08,150.00L1405.23,150.76A3.10,3.10 0 0 1 1405.29,150.61L1406.77,153.16L1406.06,153.87L1403.51,152.39A3.10,3.10 0 0 1 1403.66,152.33L1402.90,155.18L1401.90,155.18L1401.14,152.33A3.10,3.10 0 0 1 1401.29,152.39L1398.74,153.87L1398.03,153.16L1399.51,150.61A3.10,3.10 0 0 1 1399.57,150.76L1396.72,150.00L1396.72,149.00L1399.57,148.24A3.10,3.10 0 0 1 1399.51,148.39L1398.03,145.84L1398.74,145.13L1401.29,146.61A3.10,3.10 0 0 1 1401.14,146.67Z" fill="#1f1f1f" stroke="#1f1f1f" stroke-width=".5"/><circle cx="1402.4" cy="149.5" r="2.2" fill="#fff"/><circle cx="1402.4" cy="149.5" r=".8" fill="#1f1f1f"/></svg>
<svg style="left:1392.00px;top:23.00px;width:26px;height:27px" viewBox="1505 128 26 27" fill="none" stroke-linecap="round" stroke-linejoin="round" ><path d="M1515.56,134.51L1516.09,131.28L1519.91,131.28L1520.44,134.51A7.50,7.50 0 0 1 1522.92,135.94L1525.98,134.78L1527.90,138.10L1525.36,140.17A7.50,7.50 0 0 1 1525.36,143.03L1527.90,145.10L1525.98,148.42L1522.92,147.26A7.50,7.50 0 0 1 1520.44,148.69L1519.91,151.92L1516.09,151.92L1515.56,148.69A7.50,7.50 0 0 1 1513.08,147.26L1510.02,148.42L1508.10,145.10L1510.64,143.03A7.50,7.50 0 0 1 1510.64,140.17L1508.10,138.10L1510.02,134.78L1513.08,135.94A7.50,7.50 0 0 1 1515.56,134.51Z" stroke="#1f1f1f" stroke-width="1.7"/><circle cx="1518.0" cy="141.6" r="3.35" stroke="#1f1f1f" stroke-width="1.6"/></svg>
<svg style="left:1504.00px;top:24.00px;width:27px;height:27px" viewBox="1617 129 27 27" fill="none" stroke-linecap="round" stroke-linejoin="round" ><circle cx="1632.4" cy="140.2" r="7.95" stroke="#1f1f1f" stroke-width="1.5"/><path d="M1626.4,146.2L1619.8,152.6" stroke="#1f1f1f" stroke-width="1.8" fill="none" /></svg>
<svg style="left:1557.00px;top:25.00px;width:22px;height:26px" viewBox="1670 130 22 26" fill="none" stroke-linecap="round" stroke-linejoin="round" ><path d="M1674.6,149.7V140.8C1674.6,136.3 1677.2,134.0 1680.5,134.0C1683.8,134.0 1686.4,136.3 1686.4,140.8V149.7" stroke="#1f1f1f" stroke-width="1.5" fill="none" /><path d="M1672.6,149.7H1688.4" stroke="#1f1f1f" stroke-width="1.6" fill="none" /><path d="M1678.6,150.6A1.95,2.0 0 0 0 1682.4,150.6" stroke="#1f1f1f" stroke-width="1.4" fill="none" /><circle cx="1680.5" cy="133.1" r=".9" fill="#1f1f1f"/></svg>
<svg style="left:19.00px;top:184.00px;width:24px;height:25px" viewBox="132 289 24 25" fill="none" stroke-linecap="round" stroke-linejoin="round" ><rect x="134.90" y="293.20" width="17.40" height="17.40" stroke="#4596d6" stroke-width="1.6" stroke-linejoin="miter"/><path d="M134.90,296.70H152.30" stroke="#4596d6" stroke-width="1.6" stroke-linecap="butt"/><path d="M138.09,292.00V295.00" stroke="#4596d6" stroke-width="1.76"/><path d="M148.82,292.00V295.00" stroke="#4596d6" stroke-width="1.76"/><path d="M140.2,303.6L142.9,305.9L147.6,300.5" stroke="#4596d6" stroke-width="1.6" fill="none" /></svg>
<svg style="left:15.00px;top:234.00px;width:32px;height:22px" viewBox="128 339 32 22" fill="none" stroke-linecap="round" stroke-linejoin="round" ><path d="M135.5,342.3H152.4L156.3,357.0H131.4Z" stroke="#1f1f1f" stroke-width="1.8" fill="none" stroke-linejoin="miter"/><path d="M144,342.5V344.4M144,346.6V349.9M144,352.4V356.6" stroke="#1f1f1f" stroke-width="1.7" fill="none" stroke-linecap="butt"/></svg>
<svg style="left:18.00px;top:280.00px;width:26px;height:25px" viewBox="131 385 26 25" fill="none" stroke-linecap="round" stroke-linejoin="round" ><path d="M140.2,390.2L134.4,392.2V406.4L140.2,404.3L147,406.6L152.7,404.4V398.6" stroke="#1f1f1f" stroke-width="1.7" fill="none" /><path d="M140.2,390.2V404.3M147,402.4V406.6" stroke="#1f1f1f" stroke-width="1.6" fill="none" /><path d="M149,400.0C146.6,396.8 145.1,394.6 145.1,392.2A3.9,3.9 0 0 1 152.9,392.2C152.9,394.6 151.4,396.8 149,400.0Z" stroke="#1f1f1f" stroke-width="1.5" fill="#fff" /><circle cx="149" cy="392.2" r="1" fill="#1f1f1f"/></svg>
<svg style="left:19.00px;top:330.00px;width:25px;height:24px" viewBox="132 435 25 24" fill="none" stroke-linecap="round" stroke-linejoin="round" ><path d="M143.6,439.8H153.6" stroke="#1f1f1f" stroke-width="1.7" fill="none" stroke-linecap="butt"/><path d="M134.5,439.90000000000003L136.3,441.3L139.5,438.40000000000003" stroke="#1f1f1f" stroke-width="1.7" fill="none" /><path d="M143.6,446.6H153.6" stroke="#1f1f1f" stroke-width="1.7" fill="none" stroke-linecap="butt"/><path d="M134.5,446.70000000000005L136.3,448.1L139.5,445.20000000000005" stroke="#1f1f1f" stroke-width="1.7" fill="none" /><path d="M143.6,453.5H153.6" stroke="#1f1f1f" stroke-width="1.7" fill="none" stroke-linecap="butt"/><path d="M134.5,453.6L136.3,455.0L139.5,452.1" stroke="#1f1f1f" stroke-width="1.7" fill="none" /></svg>
<svg style="left:255.00px;top:99.00px;width:16px;height:19px" viewBox="368 204 16 19" fill="none" stroke-linecap="round" stroke-linejoin="round" ><path d="M379.5,207.2L372.6,213.5L379.5,220.0" stroke="#666" stroke-width="1.3" fill="none" /></svg>
<svg style="left:544.00px;top:95.00px;width:22px;height:24px" viewBox="657 200 22 24" fill="none" stroke-linecap="round" stroke-linejoin="round" ><rect x="659.95" y="204.05" width="16.10" height="16.30" stroke="#222" stroke-width="1.5" stroke-linejoin="miter"/><path d="M659.95,207.28H676.05" stroke="#222" stroke-width="1.5" stroke-linecap="butt"/><path d="M662.90,202.90V205.68" stroke="#222" stroke-width="1.65"/><path d="M672.84,202.90V205.68" stroke="#222" stroke-width="1.65"/><rect x="665.43" y="209.76" width="1.62" height="1.62" fill="#222" rx=".3"/><rect x="668.69" y="209.76" width="1.62" height="1.62" fill="#222" rx=".3"/><rect x="672.03" y="209.76" width="1.62" height="1.62" fill="#222" rx=".3"/><rect x="662.17" y="212.96" width="1.62" height="1.62" fill="#222" rx=".3"/><rect x="665.43" y="212.96" width="1.62" height="1.62" fill="#222" rx=".3"/><rect x="668.69" y="212.96" width="1.62" height="1.62" fill="#222" rx=".3"/><rect x="672.03" y="212.96" width="1.62" height="1.62" fill="#222" rx=".3"/><rect x="662.17" y="216.15" width="1.62" height="1.62" fill="#222" rx=".3"/><rect x="665.43" y="216.15" width="1.62" height="1.62" fill="#222" rx=".3"/><rect x="668.69" y="216.15" width="1.62" height="1.62" fill="#222" rx=".3"/></svg>
<svg style="left:597.00px;top:100.00px;width:12px;height:16px" viewBox="710 205 12 16" fill="none" stroke-linecap="round" stroke-linejoin="round" ><path d="M718.5,208.4L713.3,212.8L718.5,217.4" stroke="#333" stroke-width="1.2" fill="none" /></svg>
<svg style="left:833.00px;top:100.00px;width:12px;height:16px" viewBox="946 205 12 16" fill="none" stroke-linecap="round" stroke-linejoin="round" ><path d="M950.1,208.2L955.3,212.9L950.1,217.6" stroke="#333" stroke-width="1.2" fill="none" /></svg>
<svg style="left:1259.00px;top:97.00px;width:24px;height:24px" viewBox="1372 202 24 24" fill="none" stroke-linecap="round" stroke-linejoin="round" ><path d="M1393.10,204.50L1386.10,205.50L1378.70,216.10L1381.90,218.90L1392.40,211.20ZM1380.50,212.90L1374.40,216.40L1378.70,216.60M1385.00,217.40L1381.50,223.50L1380.60,218.60" stroke="#fff" stroke-width="1.3" fill="none"/><circle cx="1387.50" cy="210.10" r="1.50" fill="#fff"/><path d="M1376.80,218.60L1375.00,222.90L1379.20,221.30Z" fill="#fff" stroke="#fff" stroke-width="0.50"/></svg>
<svg style="left:1459.00px;top:97.00px;width:23px;height:22px" viewBox="1572 202 23 22" fill="none" stroke-linecap="round" stroke-linejoin="round" ><path d="M1583.5,204.6V220.8M1575.4,212.7H1591.6" stroke="#fff" stroke-width="1.5" fill="none" stroke-linecap="butt"/></svg>
<svg style="left:1504.00px;top:98.00px;width:25px;height:22px" viewBox="1617 203 25 22" fill="none" stroke-linecap="round" stroke-linejoin="round" ><path d="M1626.3,218.3H1623.4C1620.9,218.3 1619.3,216.6 1619.3,214.6C1619.3,212.7 1620.6,211.3 1622.4,211.0C1622.3,208.6 1624.0,207.2 1625.9,207.6C1626.8,205.9 1628.3,205.0 1630.1,205.0C1632.8,205.0 1634.8,207.0 1635.0,209.6C1637.1,209.8 1638.7,211.5 1638.7,213.8C1638.7,216.4 1636.9,218.3 1634.4,218.3H1632.4" stroke="#e6ffe6" stroke-width="1.25" fill="none" /><path d="M1629.35,214.6V222.0" stroke="#e6ffe6" stroke-width="1.4" fill="none" /><path d="M1626.9,220.3H1631.8L1629.35,223.0Z" fill="#e6ffe6" stroke="#e6ffe6" stroke-width=".6"/></svg>
<svg style="left:1553.00px;top:97.00px;width:18px;height:22px" viewBox="1666 202 18 22" fill="none" stroke-linecap="round" stroke-linejoin="round" ><rect x="1668.4" y="212.4" width="12.9" height="8.9" stroke="#e6ffe6" stroke-width="1.35" stroke-linejoin="miter"/><path d="M1670.6,212.4V208.4A4.2,4.2 0 0 1 1679.0,208.4V212.4" stroke="#e6ffe6" stroke-width="1.35" fill="none" /></svg>
<svg style="left:1593.00px;top:100.00px;width:23px;height:17px" viewBox="1706 205 23 17" fill="none" stroke-linecap="round" stroke-linejoin="round" ><rect x="1708.8" y="207.8" width="17.4" height="11.3" stroke="#e2f6ff" stroke-width="1.55" stroke-linejoin="miter"/><path d="M1709,208L1717.5,213.8L1726,208" stroke="#e2f6ff" stroke-width="1.5" fill="none" /></svg>
<svg style="left:302.00px;top:189.00px;width:26px;height:18px" viewBox="415 294 26 18" fill="none" stroke-linecap="round" stroke-linejoin="round" ><path d="M420.5,296.6H435.5L438.5,309.2H417.5Z" stroke="#e6fbff" stroke-width="1.3" fill="none" stroke-linejoin="miter"/><path d="M428,297V298.5M428,300.4V304.5M428,306.1V308.8" stroke="#e6fbff" stroke-width="1.7" fill="none" stroke-linecap="butt"/></svg>
<svg style="left:650.00px;top:186.00px;width:18px;height:24px" viewBox="763 291 18 24" fill="none" stroke-linecap="round" stroke-linejoin="round" ><path d="M771.8,312.0C768.4,307.5 765.7,303.6 765.7,300.1A6.1,6.1 0 0 1 777.9,300.1C777.9,303.6 775.2,307.5 771.8,312.0Z" stroke="#fff" stroke-width="1.25" fill="none" /><circle cx="771.8" cy="300.1" r="1.05" fill="#fff"/></svg>
<svg style="left:993.00px;top:187.00px;width:20px;height:25px" viewBox="1106 292 20 25" fill="none" stroke-linecap="round" stroke-linejoin="round" ><path d="M1122.0,294.8C1117.0,296.8 1109.3,296.6 1108.5,302.3C1108.1,304.7 1109.4,306.8 1111.4,307.9" stroke="#e4fff6" stroke-width="1.25" fill="none" /><path d="M1122.0,294.8C1123.3,299.5 1124.0,305.5 1121.8,309.0C1120.0,311.7 1116.2,311.6 1114.3,309.4" stroke="#e4fff6" stroke-width="1.25" fill="none" /><path d="M1118.3,300.5C1114.4,304.2 1110.9,309.0 1110.6,314.0" stroke="#e4fff6" stroke-width="1.25" fill="none" /></svg>
<svg style="left:1335.00px;top:190.00px;width:23px;height:16px" viewBox="1448 295 23 16" fill="none" stroke-linecap="round" stroke-linejoin="round" ><rect x="1450.0" y="297.0" width="18.8" height="11.2" stroke="#fff8c8" stroke-width="2" stroke-linejoin="miter"/><rect x="1452.6" y="299.4" width="13.6" height="6.4" rx="1.6" stroke="#fff8c8" stroke-width=".7" opacity=".55"/><path d="M1458.4,300.6L1459.6,299.9V305.6" stroke="#fff8c8" stroke-width="1.2" fill="none" stroke-linecap="butt"/><circle cx="1454.9" cy="302.6" r=".85" fill="#fff8c8"/><circle cx="1464.0" cy="302.6" r=".85" fill="#fff8c8"/></svg>
<svg style="left:579.00px;top:391.00px;width:17px;height:11px" viewBox="692 496 17 11" fill="none" stroke-linecap="round" stroke-linejoin="round" ><path d="M694.2,501.4C696.0,499.0 698.2,498.2 700.6,498.2C703.0,498.2 705.2,499.0 706.9,501.4C705.2,503.8 703.0,504.6 700.6,504.6C698.2,504.6 696.0,503.8 694.2,501.4Z" stroke="#4a4a4a" stroke-width="1.15" fill="none" /><circle cx="700.6" cy="501.4" r="2.2" stroke="#4a4a4a" stroke-width="1.1"/><circle cx="700.6" cy="501.3" r="1.1" fill="#4a4a4a"/></svg>
<svg style="left:580.00px;top:445.00px;width:15px;height:15px" viewBox="693 550 15 15" fill="none" stroke-linecap="round" stroke-linejoin="round" ><path d="M705.60,552.18L701.68,552.74L697.53,558.68L699.32,560.24L705.20,555.93ZM698.54,556.88L695.12,558.84L697.53,558.96M701.06,559.40L699.10,562.82L698.60,560.08" stroke="#4a4a4a" stroke-width="0.9" fill="none"/><circle cx="702.46" cy="555.32" r="0.84" fill="#4a4a4a"/><path d="M696.47,560.08L695.46,562.48L697.81,561.59Z" fill="#4a4a4a" stroke="#4a4a4a" stroke-width="0.28"/></svg>
<svg style="left:582.00px;top:501.00px;width:12px;height:13px" viewBox="695 606 12 13" fill="none" stroke-linecap="round" stroke-linejoin="round" ><rect x="696.5" y="608.4" width="8.6" height="9.0" stroke="#d2d2d2" stroke-width=".9" stroke-linejoin="miter"/><path d="M696.5,610.5H705.1" stroke="#d2d2d2" stroke-width="0.9" fill="none" /><path d="M700.8,612.0V616.2M698.7,614.1H702.9" stroke="#d2d2d2" stroke-width="0.8" fill="none" /></svg>
<svg style="left:582.00px;top:556.00px;width:12px;height:14px" viewBox="695 661 12 14" fill="none" stroke-linecap="round" stroke-linejoin="round" ><rect x="696.5" y="667.4" width="8.0" height="6.0" stroke="#4a4a4a" stroke-width=".95" stroke-linejoin="miter"/><path d="M698.3,667.4V664.9A2.2,2.5 0 0 1 702.7,664.9V667.4" stroke="#4a4a4a" stroke-width="0.95" fill="none" /></svg>
<svg style="left:581.00px;top:612.00px;width:13px;height:13px" viewBox="694 717 13 13" fill="none" stroke-linecap="round" stroke-linejoin="round" ><path d="M695.6,719.7H697.2C699.6,719.7 700.6,727.1 703.2,727.1H704.2" stroke="#4a4a4a" stroke-width="0.95" fill="none" /><path d="M695.6,727.1H697.2C698.3,727.1 699.0,725.6 699.6,724.2M701.0,722.0C701.6,720.6 702.3,719.8 703.2,719.8H704.2" stroke="#4a4a4a" stroke-width="0.95" fill="none" /><path d="M703.6,718.4L705.7,719.9L703.6,721.4Z" fill="#4a4a4a"/><path d="M703.6,725.7L705.7,727.2L703.6,728.7Z" fill="#4a4a4a"/></svg>
<svg style="left:581.00px;top:668.00px;width:13px;height:12px" viewBox="694 773 13 12" fill="none" stroke-linecap="round" stroke-linejoin="round" ><path d="M698.6,782.1H695.8V774.6H702.2V775.6" stroke="#777" stroke-width="0.95" fill="none" stroke-linejoin="miter"/><rect x="699.8" y="775.9" width="5.6" height="7.3" stroke="#4a4a4a" stroke-width="1" fill="#f8f8f8" stroke-linejoin="miter"/></svg>
<svg style="left:582.00px;top:723.00px;width:12px;height:13px" viewBox="695 828 12 13" fill="none" stroke-linecap="round" stroke-linejoin="round" ><rect x="696.5" y="830.4" width="8.6" height="9.0" stroke="#4a4a4a" stroke-width=".95" stroke-linejoin="miter"/><path d="M696.5,832.4H705.1" stroke="#4a4a4a" stroke-width="0.95" fill="none" /><path d="M699.4,834.6L702.2,837.4M702.2,834.6L699.4,837.4" stroke="#4a4a4a" stroke-width="0.9" fill="none" /></svg>
<svg style="left:582.00px;top:778.00px;width:12px;height:14px" viewBox="695 883 12 14" fill="none" stroke-linecap="round" stroke-linejoin="round" ><path d="M697.0,885.4H704.6M697.0,894.4H704.6" stroke="#4a4a4a" stroke-width="1.0" fill="none" /><path d="M697.9,885.6V887.4L700.8,890.0L703.7,887.4V885.6M697.9,894.2V892.5L700.8,890.0L703.7,892.5V894.2" stroke="#4a4a4a" stroke-width="0.9" fill="none" /><path d="M699.2,894L700.8,892.2L702.4,894Z" fill="#4a4a4a"/></svg>
</div>
</body></html>
